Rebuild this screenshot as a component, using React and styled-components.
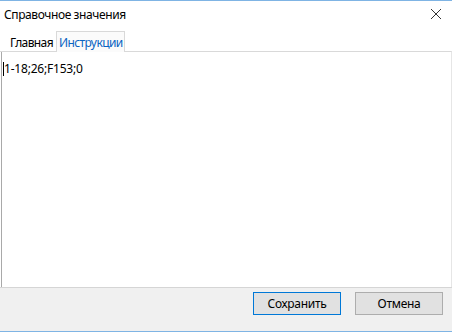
import React from "react";
import styled, { createGlobalStyle } from "styled-components";

const GlobalStyle = createGlobalStyle`
  html, body {
    margin: 0;
    padding: 0;
    background: #ffffff;
  }
  body {
    font-family: "Noto Sans", "Liberation Sans", sans-serif;
    font-size: 12px;
    color: #000;
  }
`;

const Window = styled.div`
  width: 452px;
  height: 330px;
  border-top: 1px solid #7fb4e4;
  border-bottom: 1px solid #7fb4e4;
  display: flex;
  flex-direction: column;
  background: #ffffff;
`;

const TitleBar = styled.div`
  height: 29px;
  display: flex;
  align-items: center;
  justify-content: space-between;
  padding: 0 10px 0 4px;
`;

const Title = styled.span`
  font-size: 12px;
  letter-spacing: -0.4px;
  margin-top: -3px;
`;

const CloseButton = styled.div`
  width: 12px;
  height: 12px;
  margin-top: -3px;
  display: flex;
`;

const TabStrip = styled.div`
  display: flex;
  align-items: flex-end;
  height: 21px;
  padding-left: 6px;
  position: relative;
  z-index: 1;
`;

const Tab = styled.div`
  height: ${(p) => (p.$active ? "21px" : "18px")};
  padding: ${(p) => (p.$active ? "0 1px 0 2px" : "0 2px 0 3px")};
  display: flex;
  align-items: center;
  box-sizing: border-box;
  letter-spacing: -0.6px;
  color: ${(p) => (p.$active ? "#0a64c2" : "#000")};
  background: ${(p) => (p.$active ? "#fbfbfb" : "transparent")};
  border: 1px solid ${(p) => (p.$active ? "#d9d9d9" : "transparent")};
  border-bottom: none;
  margin-bottom: ${(p) => (p.$active ? "-1px" : "0")};
`;

const Panel = styled.div`
  flex: 1;
  display: flex;
  border-top: 1px solid #d9d9d9;
  border-right: 1px solid #e6e6e6;
`;

const Editor = styled.div`
  flex: 1;
  margin-left: 1px;
  border-left: 1px solid #a9a9a9;
  padding: 8px 0 0 1px;
  font-size: 12px;
  letter-spacing: -0.2px;
`;

const Caret = styled.span`
  display: inline-block;
  width: 1px;
  height: 14px;
  background: #000;
  vertical-align: -3px;
`;

const Footer = styled.div`
  height: 39px;
  background: #f0f0f0;
  border-top: 1px solid #d5d5d5;
  display: flex;
  justify-content: flex-end;
  align-items: flex-start;
  gap: 14px;
  padding: 4px 9px 0 0;
`;

const Button = styled.button`
  width: 88px;
  height: 23px;
  background: #e1e1e1;
  border: 1px solid ${(p) => (p.$default ? "#0078d7" : "#adadad")};
  font-family: "Noto Sans", "Liberation Sans", sans-serif;
  font-size: 12px;
  letter-spacing: -0.3px;
  color: #000;
  padding: 0;
  margin: 0;
`;

export default function App() {
  return (
    <>
      <GlobalStyle />
      <Window>
        <TitleBar>
          <Title>Справочное значения</Title>
          <CloseButton>
            <svg width="12" height="12" viewBox="0 0 12 12">
              <path d="M1 1 L11 11 M11 1 L1 11" stroke="#333" strokeWidth="1" fill="none" />
            </svg>
          </CloseButton>
        </TitleBar>
        <TabStrip>
          <Tab>Главная</Tab>
          <Tab $active>Инструкции</Tab>
        </TabStrip>
        <Panel>
          <Editor>
            <Caret />1-18;26;F153;0
          </Editor>
        </Panel>
        <Footer>
          <Button $default>Сохранить</Button>
          <Button>Отмена</Button>
        </Footer>
      </Window>
    </>
  );
}
